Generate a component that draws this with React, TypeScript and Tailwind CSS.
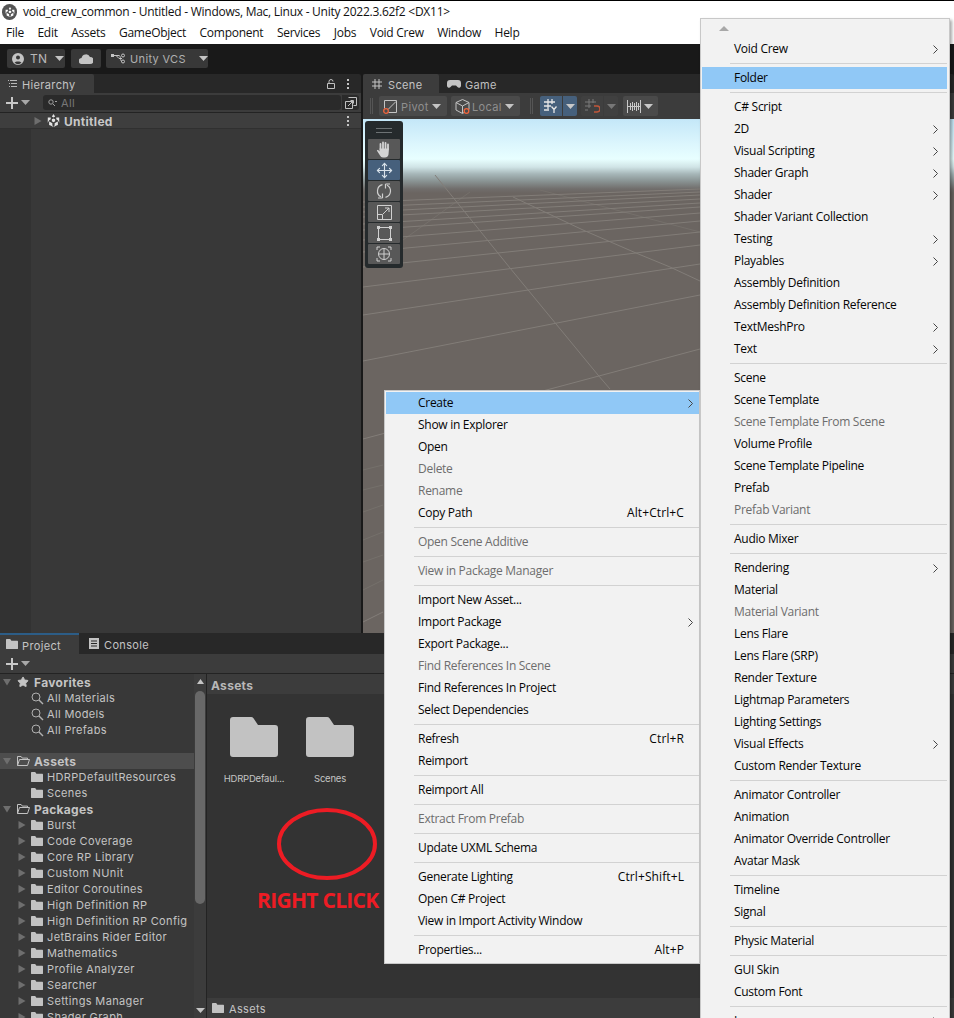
import { Move, Star } from 'lucide-react';

type Entry = { label: string; sub?: boolean; off?: boolean; active?: boolean; keys?: string } | 'sep';

const contextItems: Entry[] = [
  { label: 'Create', sub: true, active: true },
  { label: 'Show in Explorer' },
  { label: 'Open' },
  { label: 'Delete', off: true },
  { label: 'Rename', off: true },
  { label: 'Copy Path', keys: 'Alt+Ctrl+C' },
  'sep',
  { label: 'Open Scene Additive', off: true },
  'sep',
  { label: 'View in Package Manager', off: true },
  'sep',
  { label: 'Import New Asset...' },
  { label: 'Import Package', sub: true },
  { label: 'Export Package...' },
  { label: 'Find References In Scene', off: true },
  { label: 'Find References In Project' },
  { label: 'Select Dependencies' },
  'sep',
  { label: 'Refresh', keys: 'Ctrl+R' },
  { label: 'Reimport' },
  'sep',
  { label: 'Reimport All' },
  'sep',
  { label: 'Extract From Prefab', off: true },
  'sep',
  { label: 'Update UXML Schema' },
  'sep',
  { label: 'Generate Lighting', keys: 'Ctrl+Shift+L' },
  { label: 'Open C# Project' },
  { label: 'View in Import Activity Window' },
  'sep',
  { label: 'Properties...', keys: 'Alt+P' },
];

const createItems: Entry[] = [
  { label: 'Void Crew', sub: true },
  'sep',
  { label: 'Folder', active: true },
  'sep',
  { label: 'C# Script' },
  { label: '2D', sub: true },
  { label: 'Visual Scripting', sub: true },
  { label: 'Shader Graph', sub: true },
  { label: 'Shader', sub: true },
  { label: 'Shader Variant Collection' },
  { label: 'Testing', sub: true },
  { label: 'Playables', sub: true },
  { label: 'Assembly Definition' },
  { label: 'Assembly Definition Reference' },
  { label: 'TextMeshPro', sub: true },
  { label: 'Text', sub: true },
  'sep',
  { label: 'Scene' },
  { label: 'Scene Template' },
  { label: 'Scene Template From Scene', off: true },
  { label: 'Volume Profile' },
  { label: 'Scene Template Pipeline' },
  { label: 'Prefab' },
  { label: 'Prefab Variant', off: true },
  'sep',
  { label: 'Audio Mixer' },
  'sep',
  { label: 'Rendering', sub: true },
  { label: 'Material' },
  { label: 'Material Variant', off: true },
  { label: 'Lens Flare' },
  { label: 'Lens Flare (SRP)' },
  { label: 'Render Texture' },
  { label: 'Lightmap Parameters' },
  { label: 'Lighting Settings' },
  { label: 'Visual Effects', sub: true },
  { label: 'Custom Render Texture' },
  'sep',
  { label: 'Animator Controller' },
  { label: 'Animation' },
  { label: 'Animator Override Controller' },
  { label: 'Avatar Mask' },
  'sep',
  { label: 'Timeline' },
  { label: 'Signal' },
  'sep',
  { label: 'Physic Material' },
  'sep',
  { label: 'GUI Skin' },
  { label: 'Custom Font' },
  'sep',
  { label: 'Legacy', sub: true },
];

const packages = [
  'Burst',
  'Code Coverage',
  'Core RP Library',
  'Custom NUnit',
  'Editor Coroutines',
  'High Definition RP',
  'High Definition RP Config',
  'JetBrains Rider Editor',
  'Mathematics',
  'Profile Analyzer',
  'Searcher',
  'Settings Manager',
  'Shader Graph',
];

const menuBar = ['File', 'Edit', 'Assets', 'GameObject', 'Component', 'Services', 'Jobs', 'Void Crew', 'Window', 'Help'];

// grid lines of the scene view, in screenshot coordinates
const majorLines = [
  'M363 439L700 349',
  'M363 361L700 295',
  'M363 315L700 264',
  'M363 287L700 245',
  'M363 267L700 232',
  'M363 252L700 221',
  'M363 240L700 213',
  'M363 230L700 207',
  'M363 224L700 203',
  'M363 217L700 199',
  'M363 212L700 195',
  'M363 207L700 192',
  'M363 202L700 189',
  'M363 622L383 612',
  'M435 175L510 268L598 375L610 389',
  'M513 197L583 230L636 253L670 267L700 281',
];
const faintLines = [
  'M363 470L383 465',
  'M363 490L383 485',
  'M363 512L383 505',
  'M363 540L383 532',
  'M363 562L383 555',
  'M363 590L383 580',
  'M540 190L700 232',
  'M470 192L403 240',
];

const Caret = ({ className = 'text-[#c4c4c4]' }: { className?: string }) => (
  <svg width="9" height="5" viewBox="0 0 9 5" className={`shrink-0 ${className}`}>
    <path d="M0 0h9L4.5 5z" fill="currentColor" />
  </svg>
);

const TreeArrow = ({ open }: { open?: boolean }) => (
  <svg width="8" height="8" viewBox="0 0 8 8" className="shrink-0 text-[#6e6e6e]">
    <path d={open ? 'M0 1h8L4 7.5z' : 'M0.5 0l7 4-7 4z'} fill="currentColor" />
  </svg>
);

const FolderIcon = ({ size = 12 }: { size?: number }) => (
  <svg width={size} height={size * 0.84} viewBox="0 0 12 10" className="shrink-0 text-[#c2c2c2]">
    <path d="M0 .6C0 .3.3 0 .6 0h3.6l1.2 1.8h6c.3 0 .6.3.6.6v7c0 .3-.3.6-.6.6H.6C.3 10 0 9.7 0 9.4z" fill="currentColor" />
  </svg>
);

const OpenFolderIcon = () => (
  <svg width="13" height="10" viewBox="0 0 13 10" className="shrink-0 text-[#c2c2c2]">
    <path d="M.5 9.5V.5h3.6l1.2 1.6h5.2v1.4M.5 9.5l2-6h10l-2 6z" fill="none" stroke="currentColor" strokeWidth="1" />
  </svg>
);

const SearchIcon = () => (
  <svg width="13" height="13" viewBox="0 0 13 13" className="shrink-0 text-[#b0b0b0]">
    <circle cx="5" cy="5" r="4" fill="none" stroke="currentColor" />
    <path d="M8 8l4 4" stroke="currentColor" strokeWidth="1.4" />
  </svg>
);

const UnityMark = ({ size = 12, className = 'text-white' }: { size?: number; className?: string }) => (
  <svg width={size} height={size} viewBox="0 0 16 16" className={className}>
    <path d="M8 0l2 3.2-2 1.2-2-1.2zM1 4.2l3.6.1v2.3L2.7 7.7.9 10.8zM15 4.2l-3.6.1v2.3l1.9 1.1 1.8 3.1zM8 5.400l2 1.200v2.300L8 10.100 6 8.900V6.600zM2.600 9.100l2 1.100 2 1.200v2.400L8 16l-3.600-1.700-1.800-.8zM13.400 9.100l-2 1.100-2 1.200v2.400L8 16l3.600-1.700 1.800-.8z" fill="currentColor" />
  </svg>
);

const Dots = () => (
  <svg width="2" height="10" viewBox="0 0 2 10" className="shrink-0 text-[#c4c4c4]">
    <path d="M0 0h2v2H0zM0 4h2v2H0zM0 8h2v2H0z" fill="currentColor" />
  </svg>
);

const PlusMenu = () => (
  <div className="flex items-center gap-[3px]">
    <svg width="12" height="12" viewBox="0 0 12 12" className="text-[#c8c8c8]">
      <path d="M5 0h2v5h5v2H7v5H5V7H0V5h5z" fill="currentColor" />
    </svg>
    <Caret className="text-[#a8a8a8]" />
  </div>
);

const Chevron = () => (
  <svg width="5" height="9" viewBox="0 0 5 9" className="shrink-0 text-[#444]">
    <path d="M.5.5l4 4-4 4" fill="none" stroke="currentColor" />
  </svg>
);

const MenuList = ({ items, sepInset, rowInset }: { items: Entry[]; sepInset: string; rowInset: string }) => (
  <>
    {items.map((item, i) =>
      item === 'sep' ? (
        <div key={i} className={`h-[7px] pt-[3px] ${sepInset}`}>
          <div className="h-px bg-[#d2d2d2]" />
        </div>
      ) : (
        <div
          key={i}
          className={`flex h-[22px] items-center ${rowInset} ${item.active ? 'bg-[#90c8f6]' : ''} ${
            item.off ? 'text-[#6d6d6d]' : 'text-[#050505]'
          }`}
        >
          <span className="flex-1 whitespace-nowrap">{item.label}</span>
          {item.keys && <span className="mr-[9px] whitespace-nowrap tracking-[0.1px]">{item.keys}</span>}
          {item.sub && <Chevron />}
        </div>
      ),
    )}
  </>
);

const ToolButton = ({ active, children }: { active?: boolean; children: React.ReactNode }) => (
  <div className={`flex h-5 items-center justify-center rounded-[1px] ${active ? 'bg-[#46607c]' : 'bg-[#585858]'}`}>{children}</div>
);

const SceneView = () => (
  <div className="relative flex-1 bg-[linear-gradient(180deg,#c4e7f8_0px,#dcf6fd_25px,#e8ffff_40px,#d0e4e6_48px,#a6b6b8_55px,#8a9494_62px,#706d6b_70px,#6b6561_74px,#6b6561_100%)]">
    <svg width="337" height="514" viewBox="363 119 337 514" className="absolute left-0 top-0">
      <g fill="none" strokeWidth="1">
        {faintLines.map((d) => (
          <path key={d} d={d} stroke="#75706b" />
        ))}
        {majorLines.map((d) => (
          <path key={d} d={d} stroke="#827d78" />
        ))}
      </g>
    </svg>
    {/* transform tools overlay */}
    <div className="absolute left-[2px] top-[2px] flex h-[147px] w-[38px] flex-col rounded-[3px] bg-[#252a2c] px-[3px] pb-[4px]">
      <div className="flex h-[18px] flex-col items-center justify-center gap-[3px]">
        <div className="h-px w-4 bg-[#6d7274]" />
        <div className="h-px w-4 bg-[#6d7274]" />
      </div>
      <div className="flex flex-col gap-px">
        <ToolButton>
          <svg width="16" height="17" viewBox="0 0 16 17" className="text-[#d4d4d4]">
            <path d="M4.500 8V3M7 7.500V1.500M9.500 7.500V2M12 8V3.500" fill="none" stroke="currentColor" strokeWidth="1.800" strokeLinecap="round" />
            <path d="M3.500 7.500h9.500l-.5 6c-.3 1.800-1.800 3-3.500 3H7c-1.500 0-2.300-.8-3-2L.8 9.500 2 8.800l1.500 1.700z" fill="currentColor" />
          </svg>
        </ToolButton>
        <ToolButton active>
          <Move size={17} strokeWidth={1.6} className="text-[#d8e2ea]" />
        </ToolButton>
        <ToolButton>
          <svg width="16" height="16" viewBox="0 0 16 16" className="text-[#cfcfcf]">
            <path d="M5 13.800A6.500 6.500 0 016.500 1.700M11 2.200A6.500 6.500 0 019.500 14.300M9.500 1v4.500M9.500 1H14M6.500 15v-4.500M6.500 15H2" fill="none" stroke="currentColor" strokeWidth="1.200" />
          </svg>
        </ToolButton>
        <ToolButton>
          <svg width="15" height="15" viewBox="0 0 15 15" className="text-[#d0d0d0]">
            <path d="M.5.5h14v14H.5zM.5 9.500h5v5M6 9l6-6M8 3h4v4" fill="none" stroke="currentColor" />
          </svg>
        </ToolButton>
        <ToolButton>
          <svg width="15" height="15" viewBox="0 0 15 15" className="text-[#d0d0d0]">
            <path d="M3 1.500h9M3 13.500h9M1.500 3v9M13.500 3v9" stroke="currentColor" />
            <path d="M0 0h3v3H0zM12 0h3v3h-3zM0 12h3v3H0zM12 12h3v3h-3z" fill="currentColor" />
          </svg>
        </ToolButton>
        <ToolButton>
          <svg width="16" height="16" viewBox="0 0 16 16" className="text-[#cfcfcf]">
            <circle cx="8" cy="8" r="5.500" fill="none" stroke="currentColor" />
            <path d="M8 2.500v11M2.500 8h11M1 4V1h3M15 4V1h-3M1 12v3h3M15 12v3h-3" fill="none" stroke="currentColor" />
          </svg>
        </ToolButton>
      </div>
    </div>
  </div>
);

const SceneBar = () => (
  <div className="flex h-[26px] items-start bg-[#3c3c3c] pt-[3px] text-[#8f8f8f]">
    <div className="ml-[7px] mt-[2px] h-4 w-[3px] border-x border-[#555]" />
    <div className="ml-[6px] flex h-5 w-[68px] items-center gap-[3px] rounded-[2px] bg-[#4a4a4a] pl-[4px]">
      <svg width="15" height="15" viewBox="0 0 15 15" className="shrink-0">
        <path d="M1.500 1.500h12v12h-8M1.500 1.500v8M5 10.500l8-8" fill="none" stroke="#c4c4c4" />
        <circle cx="3" cy="12" r="2.300" fill="none" stroke="#f0643c" strokeWidth="1.300" />
      </svg>
      <span className="pt-[2px]">Pivot</span>
      <Caret className="ml-auto mr-[6px] text-[#c4c4c4]" />
    </div>
    <div className="ml-1 flex h-5 w-[69px] items-center gap-[2px] rounded-[2px] bg-[#4a4a4a] pl-[4px]">
      <svg width="15" height="15" viewBox="0 0 15 15" className="shrink-0">
        <path d="M7.500.5l6.500 3v7l-6.500 4-6.500-3.500V3.500zM1 3.500l6.500 3.500 6.500-3.500M7.500 7v7" fill="none" stroke="#c4c4c4" />
        <circle cx="11.500" cy="12" r="2.300" fill="#4a4a4a" stroke="#f0643c" strokeWidth="1.300" />
      </svg>
      <span className="pt-[2px]">Local</span>
      <Caret className="ml-auto mr-[6px] text-[#c4c4c4]" />
    </div>
    <div className="ml-[10px] mt-[2px] h-4 w-[3px] border-x border-[#555]" />
    <div className="ml-[7px] flex h-5 w-[22px] items-center justify-center rounded-l-[2px] bg-[#46607c]">
      <svg width="14" height="14" viewBox="0 0 14 14" className="text-[#e6e6e6]">
        <path d="M4 0v10M8 0v5M0 3h11M0 7h7M0 11h5M7.500 7.500l2.500 3 2.500-3M10 10.500V14" fill="none" stroke="currentColor" strokeWidth="1.300" />
      </svg>
    </div>
    <div className="ml-px flex h-5 w-[14px] items-center justify-center rounded-r-[2px] bg-[#46607c]">
      <Caret className="text-[#c8c8c8]" />
    </div>
    <div className="ml-1 flex h-5 w-[22px] items-center justify-center rounded-l-[2px] bg-[#404040]">
      <svg width="15" height="14" viewBox="0 0 15 14">
        <path d="M4 0v9M8 0v4M0 3h11M0 7h6M0 11h3" fill="none" stroke="#7a7a7a" />
        <path d="M9 7h3a2.500 2.500 0 010 6H9" fill="none" stroke="#c0563a" strokeWidth="1.500" />
      </svg>
    </div>
    <div className="ml-px flex h-5 w-[14px] items-center justify-center rounded-r-[2px] bg-[#404040]">
      <Caret className="text-[#777]" />
    </div>
    <div className="ml-[5px] flex h-5 w-[35px] items-center gap-[3px] rounded-[2px] bg-[#4a4a4a] pl-[4px]">
      <svg width="14" height="13" viewBox="0 0 14 13" className="shrink-0 text-[#c8c8c8]">
        <path d="M.5 0v13M3.500 3v7M5.500 2v9M7.500 3v7M9.500 2v9M11.500 3v7M13.500 0v13M0 6.500h14" fill="none" stroke="currentColor" />
      </svg>
      <Caret className="text-[#c8c8c8]" />
    </div>
  </div>
);

export default function App() {
  return (
    <div className="relative flex h-[1018px] w-[954px] flex-col overflow-hidden bg-white font-['Inter',sans-serif] text-[11px] tracking-[0.35px] text-[#c4c4c4]">
      {/* window chrome */}
      <div className="flex h-[22px] shrink-0 items-center gap-[6px] border-t border-black pl-[2px] font-['Open_Sans',sans-serif] text-[12px] tracking-[-0.26px] text-[#111]">
        <div className="flex h-4 w-[15px] items-center justify-center rounded-full bg-[#555]">
          <UnityMark size={10} />
        </div>
        <span className="whitespace-nowrap">void_crew_common - Untitled - Windows, Mac, Linux - Unity 2022.3.62f2 &lt;DX11&gt;</span>
      </div>
      <div className="flex h-[22px] shrink-0 items-center gap-[13.5px] pl-[6px] font-['Open_Sans',sans-serif] text-[12px] tracking-[-0.26px] text-[#111]">
        {menuBar.map((m) => (
          <span key={m}>{m}</span>
        ))}
      </div>

      {/* main toolbar */}
      <div className="flex h-[30px] shrink-0 items-center bg-[#191919] pb-[1px] pl-[7px]">
        <div className="flex h-[19px] w-[58px] items-center gap-[6px] rounded-[2px] bg-[#383838] pl-[5px]">
          <svg width="12" height="12" viewBox="0 0 12 12" className="shrink-0 text-[#c4c4c4]">
            <path d="M6 0a6 6 0 110 12A6 6 0 016 0zm0 2.500a2 2 0 100 4 2 2 0 000-4zM2.500 9.500a4.500 4.500 0 007 0C8.500 8 3.500 8 2.500 9.500z" fill="currentColor" fillRule="evenodd" />
          </svg>
          <span className="pt-px text-[12px] text-[#b8b8b8]">TN</span>
          <Caret className="ml-[1px]" />
        </div>
        <div className="ml-[6px] flex h-[19px] w-[30px] items-center justify-center rounded-[2px] bg-[#383838]">
          <svg width="14" height="10" viewBox="0 0 14 10" className="text-[#c4c4c4]">
            <path d="M3 10a3 3 0 01-.5-6 4.500 4.500 0 018.500-1 3.500 3.500 0 010 7z" fill="currentColor" />
          </svg>
        </div>
        <div className="ml-[5px] flex h-[19px] w-[102px] items-center gap-[5px] rounded-[2px] bg-[#383838] pl-[5px]">
          <svg width="14" height="12" viewBox="0 0 14 12" className="shrink-0 text-[#c4c4c4]">
            <path d="M1 2.500h4l3 0c2 0 1 6 3 6M5 2.500l3 3h3" fill="none" stroke="currentColor" />
            <path d="M0 1h3v3H0z" fill="currentColor" />
            <circle cx="12" cy="2.500" r="1.500" fill="none" stroke="currentColor" />
            <circle cx="12" cy="8.500" r="1.500" fill="none" stroke="currentColor" />
          </svg>
          <span className="whitespace-nowrap pt-[2px] text-[#b0b0b0]">Unity VCS</span>
          <Caret className="ml-[8px]" />
        </div>
      </div>

      {/* upper panels */}
      <div className="flex h-[559px] shrink-0 bg-[#191919]">
        <section className="flex w-[361px] shrink-0 flex-col">
          <div className="flex h-[19px] items-stretch rounded-t-[2px] bg-[#282828]">
            <div className="flex w-[94px] items-center gap-[5px] rounded-tr-[2px] bg-[#3c3c3c] pl-[8px]">
              <svg width="9" height="8" viewBox="0 0 9 8" className="shrink-0 text-[#b8b8b8]">
                <path d="M0 .5h1M2 .5h7M1 3.500h1M3 3.500h6M1 6.500h1M3 6.500h6" stroke="currentColor" />
              </svg>
              <span className="pt-[3px]">Hierarchy</span>
            </div>
            <div className="ml-auto flex items-center gap-[12px] pr-[12px]">
              <svg width="8" height="10" viewBox="0 0 8 10" className="text-[#c0c0c0]">
                <path d="M.5 4.500h7v5h-7zM2 4.500V2.500a2 2 0 014 0" fill="none" stroke="currentColor" />
              </svg>
              <Dots />
            </div>
          </div>
          <div className="flex h-[20px] items-center border-b border-[#232323] bg-[#3c3c3c] pl-[6px]">
            <PlusMenu />
            <div className="ml-[13px] flex h-[15px] w-[298px] items-center gap-[4px] rounded-[3px] bg-[#2a2a2a] pl-[5px] text-[#777]">
              <svg width="9" height="8" viewBox="0 0 9 8" className="shrink-0 text-[#a0a0a0]">
                <circle cx="3" cy="3" r="2.200" fill="none" stroke="currentColor" />
                <path d="M5 5l2 2M7 2.500h2" stroke="currentColor" />
              </svg>
              <span className="pt-px">All</span>
            </div>
            <div className="ml-px flex h-[15px] w-[17px] items-center justify-center rounded-r-[3px] bg-[#2a2a2a]">
              <svg width="12" height="12" viewBox="0 0 12 12" className="text-[#c0c0c0]">
                <path d="M3.500.5h8v8h-3M.5 4.500h7v7h-7zM3 9l5-5M5.500 3.500H8.500v3" fill="none" stroke="currentColor" />
              </svg>
            </div>
          </div>
          <div className="flex flex-1 flex-col bg-[#383838]">
            <div className="flex h-[16px] items-center border-b border-[#303030] bg-[#3e3e3e] pl-[34px] pr-[12px]">
              <TreeArrow />
              <div className="ml-[5px]">
                <UnityMark size={13} className="text-[#e4e4e4]" />
              </div>
              <span className="ml-[4px] pt-[2px] text-[12px] font-bold tracking-[0.3px] text-[#c8c8c8]">Untitled</span>
              <div className="ml-auto">
                <Dots />
              </div>
            </div>
            <div className="w-[31px] flex-1 bg-[#323232]" />
          </div>
        </section>

        <section className="ml-[2px] flex flex-1 flex-col">
          <div className="flex h-[19px] items-stretch rounded-t-[2px] bg-[#282828]">
            <div className="flex w-[76px] items-center gap-[6px] rounded-t-[2px] bg-[#3c3c3c] pl-[9px]">
              <svg width="10" height="10" viewBox="0 0 10 10" className="shrink-0 text-[#c4c4c4]">
                <path d="M3 0v10M7 0v10M0 3h10M0 7h10" stroke="currentColor" />
              </svg>
              <span className="pt-[3px]">Scene</span>
            </div>
            <div className="ml-[8px] flex items-center gap-[4px] text-[#c0c0c0]">
              <svg width="14" height="8" viewBox="0 0 14 8" className="shrink-0 text-[#c4c4c4]">
                <path d="M3 0h8a3 3 0 013 3v3a2 2 0 01-3.500 1L9 5.500H5L3.500 7A2 2 0 010 6V3a3 3 0 013-3z" fill="currentColor" />
              </svg>
              <span className="pt-[3px]">Game</span>
            </div>
          </div>
          <SceneBar />
          <SceneView />
        </section>
      </div>

      {/* project browser */}
      <section className="flex min-h-0 flex-1 flex-col">
        <div className="flex h-[21px] shrink-0 items-stretch bg-[#282828]">
          <div className="flex w-[79px] items-center gap-[4px] border-t-2 border-[#2c5d87] bg-[#3c3c3c] pl-[6px]">
            <FolderIcon />
            <span className="pt-[3px]">Project</span>
          </div>
          <div className="ml-[10px] flex items-center gap-[5px]">
            <svg width="10" height="11" viewBox="0 0 10 11" className="text-[#c4c4c4]">
              <path d="M0 0h10v11H0zM2 2.500v1h6v-1zM2 5v1h6V5zM2 7.500v1h6v-1z" fill="currentColor" fillRule="evenodd" />
            </svg>
            <span className="pt-[4px]">Console</span>
          </div>
        </div>
        <div className="flex h-[20px] shrink-0 items-center border-b border-[#232323] bg-[#3c3c3c] pl-[6px]">
          <PlusMenu />
        </div>
        <div className="flex min-h-0 flex-1">
          <div className="flex w-[194px] shrink-0 flex-col overflow-hidden bg-[#383838]">
            <div className="flex h-4 shrink-0 items-center pl-[3px] text-[12px] font-bold tracking-[0.3px]">
              <TreeArrow open />
              <Star size={12} className="ml-[6px] fill-[#c4c4c4] text-[#c4c4c4]" />
              <span className="ml-[5px] pt-[2px]">Favorites</span>
            </div>
            {['All Materials', 'All Models', 'All Prefabs'].map((f) => (
              <div key={f} className="flex h-4 shrink-0 items-center pl-[31px]">
                <SearchIcon />
                <span className="ml-[3px]">{f}</span>
              </div>
            ))}
            <div className="h-[15px] shrink-0" />
            <div className="flex h-4 shrink-0 items-center bg-[#4d4d4d] pl-[3px] text-[12px] font-bold tracking-[0.3px]">
              <TreeArrow open />
              <div className="ml-[6px] flex">
                <OpenFolderIcon />
              </div>
              <span className="ml-[4px] pt-[2px]">Assets</span>
            </div>
            {['HDRPDefaultResources', 'Scenes'].map((f) => (
              <div key={f} className="flex h-4 shrink-0 items-center pl-[31px]">
                <FolderIcon />
                <span className="ml-[4px] whitespace-nowrap">{f}</span>
              </div>
            ))}
            <div className="flex h-4 shrink-0 items-center pl-[3px] text-[12px] font-bold tracking-[0.3px]">
              <TreeArrow open />
              <div className="ml-[6px] flex">
                <OpenFolderIcon />
              </div>
              <span className="ml-[4px] pt-[2px]">Packages</span>
            </div>
            {packages.map((p) => (
              <div key={p} className="flex h-4 shrink-0 items-center pl-[18px]">
                <TreeArrow />
                <div className="ml-[5px] flex">
                  <FolderIcon />
                </div>
                <span className="ml-[4px] whitespace-nowrap">{p}</span>
              </div>
            ))}
          </div>
          {/* tree scrollbar */}
          <div className="flex w-[12px] shrink-0 flex-col items-center bg-[#3c3c3c] py-[5px]">
            <svg width="7" height="5" viewBox="0 0 7 5" className="shrink-0 text-[#c4c4c4]">
              <path d="M3.500 0L7 5H0z" fill="currentColor" />
            </svg>
            <div className="mt-[7px] h-[213px] w-[10px] rounded-[5px] bg-[#686868]" />
            <div className="flex-1" />
            <Caret className="text-[#c4c4c4]" />
          </div>
          <div className="w-px shrink-0 bg-[#232323]" />
          <div className="relative flex flex-1 flex-col bg-[#333333]">
            <div className="flex h-[20px] shrink-0 items-center bg-[#3c3c3c] pl-[4px] pt-[3px] text-[12px] font-bold tracking-[0.3px] text-[#b8b8b8]">Assets</div>
            <div className="flex flex-1 gap-[28px] pl-[23px] pt-[23px]">
              {['HDRPDefaul...', 'Scenes'].map((name) => (
                <div key={name} className="flex w-[48px] flex-col items-center">
                  <svg width="48" height="40" viewBox="0 0 48 40" className="shrink-0 text-[#c2c2c2]">
                    <path d="M0 3a3 3 0 013-3h18a3 3 0 012.500 1.300L28 8h17a3 3 0 013 3v26a3 3 0 01-3 3H3a3 3 0 01-3-3z" fill="currentColor" />
                  </svg>
                  <span className="mt-[15px] whitespace-nowrap text-[9.5px] tracking-[-0.2px]">{name}</span>
                </div>
              ))}
            </div>
            {/* annotation drawn on the screenshot */}
            <svg width="110" height="80" viewBox="0 0 110 80" className="absolute left-[65px] top-[130px]">
              <ellipse cx="55" cy="40" rx="48" ry="34" fill="none" stroke="#ed1c24" strokeWidth="4" />
            </svg>
            <span className="absolute left-[50px] top-[211px] whitespace-nowrap font-['Open_Sans',sans-serif] text-[21px] font-bold tracking-[-0.7px] text-[#ed1c24]">
              RIGHT CLICK
            </span>
            <div className="flex h-[20px] shrink-0 items-center gap-[5px] bg-[#3c3c3c] pl-[5px]">
              <FolderIcon />
              <span className="pt-[3px]">Assets</span>
            </div>
          </div>
        </div>
      </section>

      {/* context menu */}
      <div className="absolute left-[384px] top-[390px] h-[574px] w-[316px] border border-[#c8c8c8] bg-[#f2f2f2] py-px pl-px font-['Open_Sans',sans-serif] text-[12px] tracking-[-0.28px]">
        <MenuList items={contextItems} sepInset="ml-[28px]" rowInset="pl-[32px] pr-[6px]" />
      </div>

      {/* create submenu */}
      <div className="absolute left-[700px] top-[18px] h-[1010px] w-[250px] border border-[#c8c8c8] bg-[#f2f2f2] pl-[1px] pr-[2px] font-['Open_Sans',sans-serif] text-[12px] tracking-[-0.28px] shadow-[2px_2px_3px_rgba(0,0,0,0.35)]">
        <div className="flex h-[19px] items-center pl-[17px]">
          <svg width="10" height="5" viewBox="0 0 10 5" className="text-[#a8a8a8]">
            <path d="M5 0l5 5H0z" fill="currentColor" />
          </svg>
        </div>
        <MenuList items={createItems} sepInset="ml-[28px]" rowInset="pl-[32px] pr-[9px]" />
      </div>
    </div>
  );
}
